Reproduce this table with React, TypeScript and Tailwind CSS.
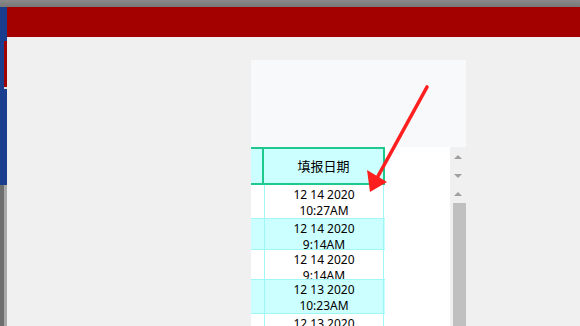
import React from "react";

const rows = [
  { a: "12 14 2020", b: "10:27AM", h: "h-[34px]", alt: false },
  { a: "12 14 2020", b: "9:14AM", h: "h-[31px]", alt: true },
  { a: "12 14 2020", b: "9:14AM", h: "h-[30px]", alt: false },
  { a: "12 13 2020", b: "10:23AM", h: "h-[34px]", alt: true },
  { a: "12 13 2020", b: "10:23AM", h: "h-[34px]", alt: false },
];

export default function App() {
  return (
    <div
      className="relative w-[580px] h-[326px] overflow-hidden bg-[#f0f0f0] flex flex-col"
      style={{ fontFamily: '"Noto Sans", "Noto Sans CJK SC", sans-serif' }}
    >
      <div className="h-[7px] bg-gradient-to-b from-[#8a8a8a] to-[#777777] shrink-0" />
      <div className="flex flex-1 min-h-0">
        <div className="w-[7px] flex flex-col shrink-0">
          <div className="h-[178px] bg-[#1b3d8e] flex">
            <div className="w-[4px]" />
            <div className="flex-1 flex flex-col">
              <div className="h-[34px]" />
              <div className="h-[46px] bg-[#a00000]" />
              <div className="h-[2px] bg-[#e0e0e0]" />
            </div>
          </div>
          <div className="flex-1 flex">
            <div className="w-[4px] bg-[#6e6e6e]" />
            <div className="flex-1 bg-[#a8a8a8]" />
          </div>
        </div>
        <div className="flex-1 flex flex-col min-w-0">
          <div className="h-[30px] bg-[#a30000] shrink-0" />
          <div className="flex-1 bg-[#f0f0f0] pl-[244px] pt-[23px] min-h-0">
            <div className="w-[215px] flex flex-col h-full">
              <div className="h-[87px] bg-[#f8f9fa] shrink-0" />
              <div className="flex flex-1 min-h-0">
                <div className="w-[134px] flex flex-col bg-white text-[12px] leading-[16px] text-black">
                  <div className="h-[38px] flex border-t-2 border-b-2 border-r-2 border-[#1fc98e] bg-[#ccffff] shrink-0">
                    <div className="w-[13px] border-r-2 border-[#1fc98e]" />
                    <div className="flex-1 flex items-center justify-center text-[13px]">填报日期</div>
                  </div>
                  {rows.map((r, i) => (
                    <div
                      key={i}
                      className={`${r.h} flex shrink-0 overflow-hidden border-b border-[#9ff7f7] ${r.alt ? "bg-[#ccffff]" : "bg-white"}`}
                    >
                      <div className="w-[14px] border-r border-[#9ff7f7]" />
                      <div className="w-[119px] border-r border-[#9ff7f7] flex flex-col items-center pt-[2px]">
                        <div>{r.a}</div>
                        <div>{r.b}</div>
                      </div>
                    </div>
                  ))}
                </div>
                <div className="w-[65px] bg-white" />
                <div className="w-[16px] bg-[#f0f0f0] flex flex-col items-center">
                  <div className="h-[19px] flex items-center justify-center">
                    <div className="w-0 h-0 border-l-[4px] border-r-[4px] border-b-[4px] border-l-transparent border-r-transparent border-b-[#a0a0a0]" />
                  </div>
                  <div className="h-[19px] flex items-center justify-center">
                    <div className="w-0 h-0 border-l-[4px] border-r-[4px] border-t-[4px] border-l-transparent border-r-transparent border-t-[#a0a0a0]" />
                  </div>
                  <div className="h-[18px] flex items-center justify-center">
                    <div className="w-0 h-0 border-l-[4px] border-r-[4px] border-b-[4px] border-l-transparent border-r-transparent border-b-[#a0a0a0]" />
                  </div>
                  <div className="w-[13px] ml-[2px] flex-1 bg-[#c0c0c0]" />
                </div>
              </div>
            </div>
          </div>
        </div>
      </div>
      <svg className="absolute left-0 top-0 pointer-events-none" width="580" height="326">
        <line x1="427" y1="87" x2="377" y2="178" stroke="#ff1f1f" strokeWidth="3.6" strokeLinecap="round" />
        <polygon points="367,170 387,182 370,192" fill="#ff1f1f" />
      </svg>
    </div>
  );
}
